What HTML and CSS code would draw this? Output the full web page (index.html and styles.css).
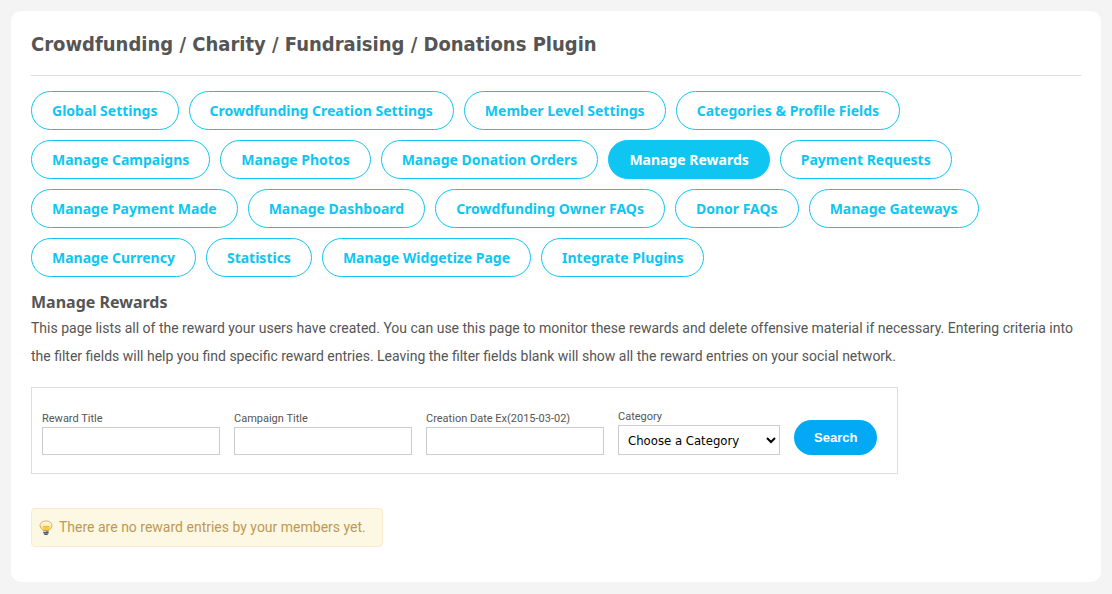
FILE: index.html
```html
<!DOCTYPE html>
<html lang="en">
<head>
<meta charset="utf-8">
<title>Manage Rewards</title>
<link rel="stylesheet" href="styles.css">
</head>
<body>
<main class="panel">
  <h1 class="page-title">Crowdfunding / Charity / Fundraising / Donations Plugin</h1>
  <nav class="tabs">
    <a class="tab" href="#">Global Settings</a>
    <a class="tab" href="#">Crowdfunding Creation Settings</a>
    <a class="tab" href="#">Member Level Settings</a>
    <a class="tab" href="#">Categories &amp; Profile Fields</a>
    <a class="tab" href="#">Manage Campaigns</a>
    <a class="tab" href="#">Manage Photos</a>
    <a class="tab" href="#">Manage Donation Orders</a>
    <a class="tab tab-active" href="#" aria-current="page">Manage Rewards</a>
    <a class="tab" href="#">Payment Requests</a>
    <a class="tab" href="#">Manage Payment Made</a>
    <a class="tab" href="#">Manage Dashboard</a>
    <a class="tab" href="#">Crowdfunding Owner FAQs</a>
    <a class="tab" href="#">Donor FAQs</a>
    <a class="tab" href="#">Manage Gateways</a>
    <a class="tab" href="#">Manage Currency</a>
    <a class="tab" href="#">Statistics</a>
    <a class="tab" href="#">Manage Widgetize Page</a>
    <a class="tab" href="#">Integrate Plugins</a>
  </nav>
  <h2 class="section-title">Manage Rewards</h2>
  <p class="description">This page lists all of the reward your users have created. You can use this page to monitor these rewards and delete offensive material if necessary. Entering criteria into the filter fields will help you find specific reward entries. Leaving the filter fields blank will show all the reward entries on your social network.</p>
  <form class="filter">
    <div class="field">
      <label for="reward-title">Reward Title</label>
      <input class="text-box" type="text" id="reward-title">
    </div>
    <div class="field">
      <label for="campaign-title">Campaign Title</label>
      <input class="text-box" type="text" id="campaign-title">
    </div>
    <div class="field">
      <label for="creation-date">Creation Date Ex(2015-03-02)</label>
      <input class="text-box" type="text" id="creation-date">
    </div>
    <div class="field">
      <label for="category">Category</label>
      <select class="drop-down" id="category"><option>Choose a Category</option></select>
    </div>
    <button class="search" type="button">Search</button>
  </form>
  <div class="tip">
    <svg class="bulb" viewBox="0 0 16 16" aria-hidden="true">
      <defs>
        <linearGradient id="glass" x1="0" y1="0" x2="0" y2="1">
          <stop offset="0" stop-color="#fffaf0"/>
          <stop offset="0.5" stop-color="#fdeeb8"/>
          <stop offset="1" stop-color="#fbd45a"/>
        </linearGradient>
      </defs>
      <path d="M7 1C3.500 1 1 3 1 5.500c0 2.400 2 3.200 3 5h6c1-1.800 3-2.600 3-5C13 3 10.500 1 7 1z" fill="url(#glass)" stroke="#e5a85f"/>
      <path d="M4 6h6.500L10 10H4.500z" fill="#f9d02f"/>
      <path d="M4 6.500h6" stroke="#e9b949" fill="none"/>
      <path d="M4.500 10.500h5v3l-1 1.500h-3l-1-1.500z" fill="#8b8f93"/>
      <path d="M4.500 12.500h5M5.500 14.500h3" stroke="#4c5054" fill="none"/>
      <path d="M5 11.500h2" stroke="#dfe2e5" fill="none"/>
    </svg>
    <span>There are no reward entries by your members yet.</span>
  </div>
</main>
</body>
</html>
```
FILE: styles.css
```css
* {
  box-sizing: border-box;
}

body {
  margin: 0;
  padding: 11px;
  background: #f4f4f4;
  color: #555;
  font-family: Roboto, "Noto Sans", sans-serif;
  font-size: 14px;
}

.panel {
  padding: 20px 20px 35px;
  border-radius: 10px;
  background: #fff;
}

.page-title {
  margin: 0 0 15px;
  padding-bottom: 18px;
  border-bottom: 1px solid #ddd;
  font-family: "DejaVu Sans Condensed", Tahoma, sans-serif;
  font-size: 20px;
  line-height: 26px;
}

.tabs {
  display: flex;
  flex-wrap: wrap;
  gap: 10px;
}

.tab {
  padding: 0 20px;
  border: 1px solid #0fc6f2;
  border-radius: 20px;
  color: #0fc6f2;
  font-family: "Noto Sans", sans-serif;
  font-weight: bold;
  line-height: 37px;
  text-decoration: none;
}

.tab-active {
  background: #0fc6f2;
  color: #fff;
}

.section-title {
  margin: 15px 0 2px;
  font-family: "Noto Sans", sans-serif;
  font-size: 16px;
  line-height: 20px;
}

.description {
  margin: 0;
  line-height: 28px;
}

.filter {
  display: flex;
  align-items: flex-end;
  gap: 14px;
  width: fit-content;
  margin-top: 17px;
  padding: 21px 20px 18px 10px;
  border: 1px solid #ddd;
}

.field {
  display: flex;
  flex-direction: column;
}

.field label {
  font-size: 11px;
  line-height: 16px;
}

.text-box,
.drop-down {
  border: 1px solid #ccc;
  border-radius: 0;
  background: #fff;
  color: #000;
}

.text-box {
  width: 178px;
  height: 28px;
  padding: 0 5px;
}

.drop-down {
  width: 162px;
  height: 30px;
  padding: 0 5px;
  font-family: "DejaVu Sans Condensed", Tahoma, sans-serif;
  font-size: 13px;
}

.search {
  height: 35px;
  padding: 0 20px;
  border: 0;
  border-radius: 18px;
  background: #04a9f6;
  color: #fff;
  font-family: "Liberation Sans", Arial, sans-serif;
  font-size: 13px;
  font-weight: bold;
}

.tip {
  display: flex;
  align-items: center;
  gap: 4px;
  width: fit-content;
  margin-top: 34px;
  padding: 0 16px 0 7px;
  border: 1px solid #faebcc;
  border-radius: 4px;
  background: #fcf8e3;
  color: #c09853;
  line-height: 37px;
}

.bulb {
  width: 16px;
  height: 16px;
}
```
